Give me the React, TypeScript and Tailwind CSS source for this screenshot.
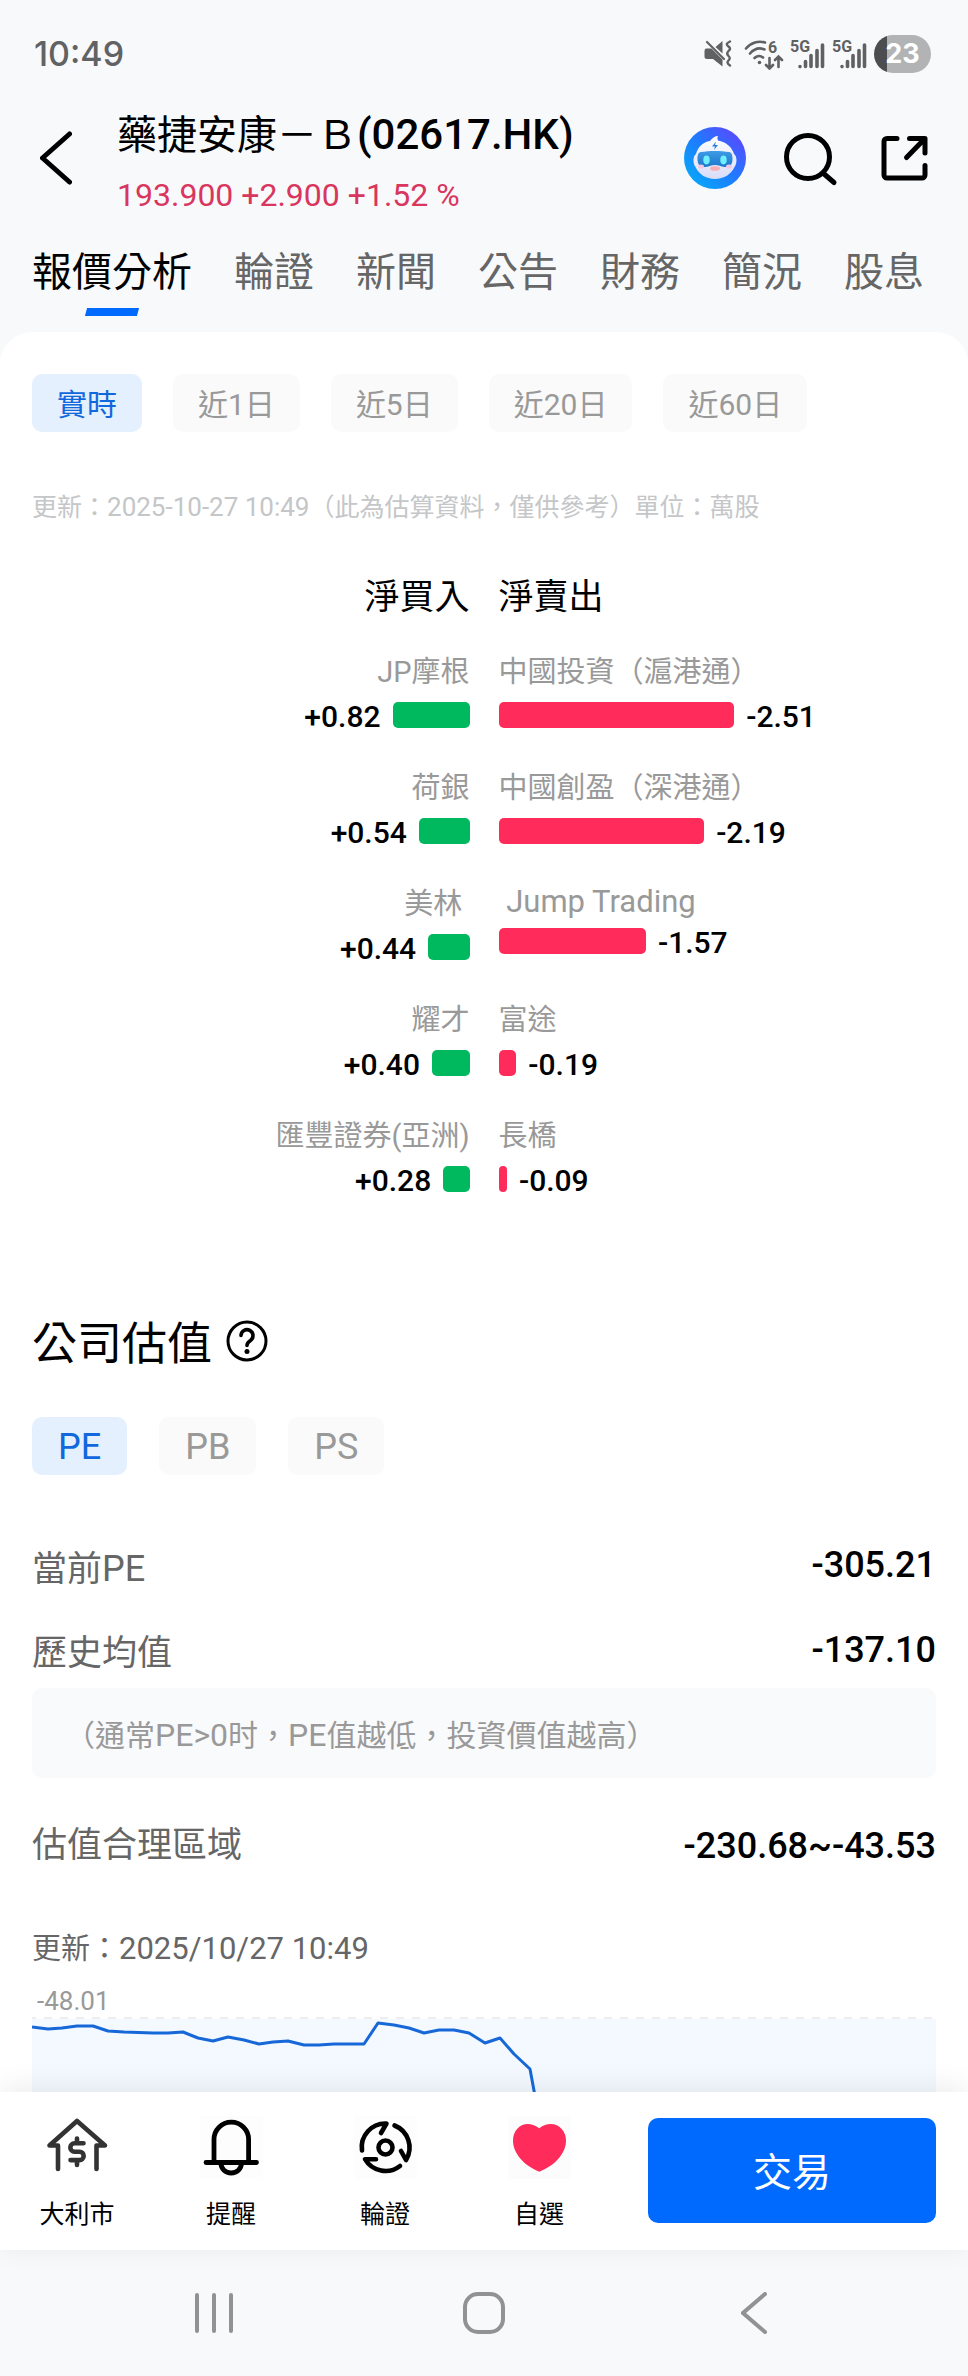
import { useState } from 'react';
import type { ReactNode } from 'react';

const tabs = ['報價分析', '輪證', '新聞', '公告', '財務', '簡況', '股息'];
const periods = ['實時', '近1日', '近5日', '近20日', '近60日'];
const ratios = ['PE', 'PB', 'PS'];

type Broker = { name: string; value: number; latin?: boolean };

const flows: { buy: Broker; sell: Broker }[] = [
  { buy: { name: 'JP摩根', value: 0.82 }, sell: { name: '中國投資（滬港通）', value: 2.51 } },
  { buy: { name: '荷銀', value: 0.54 }, sell: { name: '中國創盈（深港通）', value: 2.19 } },
  { buy: { name: '美林\u00a0', value: 0.44 }, sell: { name: '\u00a0Jump Trading', value: 1.57, latin: true } },
  { buy: { name: '耀才', value: 0.4 }, sell: { name: '富途', value: 0.19 } },
  { buy: { name: '匯豐證券(亞洲)', value: 0.28 }, sell: { name: '長橋', value: 0.09 } },
];

// Share of a column's width that one unit (10k shares) takes.
const PERCENT_PER_UNIT = 20;

const pePoints =
  '0,11 16,13 30,12 45,10 61,10 76,15 92,16 121,17 136,17 151,16 166,22 181,25 196,21 212,24 227,28 241,26 256,25 272,29 287,29 302,28 332,28 346,7 362,9 377,12 392,17 407,14 422,14 437,17 453,27 468,22 482,38 498,53 503,80';

function MuteIcon() {
  return (
    <svg width="28" height="28" viewBox="0 0 28 28" fill="#5f6162" aria-label="靜音">
      <path d="M2 8.5h5.500L18.500 19.500V26.500L9 19H3Q0.500 19 0.500 16.500V11Q0.500 8.800 2 8.500Z" />
      <path d="M18.500 1v12.500L11.500 7Z" />
      <path d="M3 2l17 17" stroke="#5f6162" strokeWidth="2.200" strokeLinecap="round" />
      <path d="M26 1.500c-4 2-4 3 -1.500 5s1.500 3 0 4.500-2 3 0 5 1.500 3 0 4.500-1.500 3 1.500 5" fill="none" stroke="#5f6162" strokeWidth="2.400" strokeLinecap="round" />
    </svg>
  );
}

function WifiIcon() {
  return (
    <svg width="40" height="32" viewBox="0 0 40 32" fill="none" stroke="#5f6162" strokeWidth="2.600" strokeLinecap="round" aria-label="Wi-Fi 6">
      <path d="M2 10.500C7 4.500 14.500 2.500 21 4.500" />
      <path d="M6 15.500C10.500 10.500 16 9.500 20.500 11.500" />
      <path d="M10.500 20C13 17.500 16.500 17.500 19 19.500" />
      <circle cx="15.500" cy="24.500" r="1.800" fill="#5f6162" stroke="none" />
      <path d="M25.500 20v10M22 27l3.500 3.500 3.500-3.500M34.500 29V19M31 22l3.500-3.500L38 22" />
      <text x="24" y="15" fill="#5f6162" stroke="none" className="font-[Roboto] text-[16px] font-bold">6</text>
    </svg>
  );
}

function SignalIcon() {
  return (
    <svg width="36" height="32" viewBox="0 0 36 32" stroke="#5f6162" strokeWidth="3.600" strokeLinecap="round" aria-label="5G">
      <text x="0" y="14" fill="#5f6162" stroke="none" className="font-[Roboto] text-[16px] font-bold">5G</text>
      <path d="M10 28.500v.1M15.500 23.500v5M21 17.500v11M27 12.500v16M32.500 7v21.500" />
    </svg>
  );
}

function Battery() {
  return (
    <div className="flex h-[38px] w-[57px] items-center justify-center rounded-full bg-[linear-gradient(90deg,#4c4d4f_13px,#b1b3b5_13px)]">
      <span className="font-[Inter] text-[27px] leading-none font-bold text-white">23</span>
    </div>
  );
}

function RobotAvatar() {
  return (
    <svg width="62" height="62" viewBox="0 0 62 62">
      <defs>
        <linearGradient id="sky" x1="0" y1="1" x2="1" y2="0">
          <stop offset="0" stopColor="#00b4f5" />
          <stop offset="0.500" stopColor="#1e7bff" />
          <stop offset="1" stopColor="#6a3cff" />
        </linearGradient>
        <linearGradient id="visor" x1="0" y1="0" x2="0" y2="1">
          <stop offset="0" stopColor="#3f9be6" />
          <stop offset="1" stopColor="#1c78cc" />
        </linearGradient>
        <linearGradient id="face" x1="0" y1="0" x2="0" y2="1">
          <stop offset="0" stopColor="#ffffff" />
          <stop offset="1" stopColor="#d9dcf8" />
        </linearGradient>
      </defs>
      <circle cx="31" cy="31" r="31" fill="url(#sky)" />
      <path d="M26 14C28 11 31 9 34 9c-1 1.500-.5 3 0 4.500C42 15 48 20 50 27c3 2 3.500 9 .5 13-3 7-10.500 12-19.500 12S14.500 47 11.500 40c-3-4-2.500-11 .5-13 2-7 7-12 14-13Z" fill="url(#face)" />
      <path d="M17 25c8-1.500 20-1.500 28 0 3 .5 3.500 3 3.500 7 0 6-3 8.500-8 8-4-.5-5.500-2-9.500-2s-5.500 1.500-9.500 2c-5 .5-8-2-8-8 0-4 .5-6.500 3.500-7Z" fill="url(#visor)" />
      <ellipse cx="22.500" cy="33" rx="3.200" ry="4.400" fill="#6ff0ff" />
      <ellipse cx="39.500" cy="33" rx="3.200" ry="4.400" fill="#6ff0ff" />
      <ellipse cx="31" cy="41.500" rx="5" ry="2.300" fill="#f7aeb4" />
      <ellipse cx="17" cy="39.500" rx="3" ry="2" fill="#f3c6e6" />
      <ellipse cx="45" cy="39.500" rx="3" ry="2" fill="#f3c6e6" />
      <path d="M32 14.500l-4 5h3l-1 3.500 4-5h-3Z" fill="#2b7fe0" />
    </svg>
  );
}

function Chip({ label, active, className, onClick }: { label: string; active: boolean; className: string; onClick: () => void }) {
  return (
    <button
      type="button"
      aria-pressed={active}
      onClick={onClick}
      className={`h-[58px] rounded-[10px] pt-[2px] whitespace-nowrap ${className} ${active ? 'bg-[#e4f0fe] text-[#1068dc]' : 'bg-[#fafafa] text-[#999]'}`}
    >
      {label}
    </button>
  );
}

function FlowCell({ broker, side }: { broker: Broker; side: 'buy' | 'sell' }) {
  const buy = side === 'buy';
  return (
    <div className={buy ? 'text-right' : 'text-left'}>
      <div className={`whitespace-nowrap text-[#999] ${broker.latin ? 'text-[31px] leading-[39px]' : 'text-[29px] leading-[45px]'}`}>{broker.name}</div>
      <div className={`mt-[2px] flex h-9 items-center gap-3 ${buy ? 'flex-row-reverse' : ''}`}>
        <div className={`h-[26px] rounded-[5px] ${buy ? 'bg-[#00b95f]' : 'bg-[#ff2b5a]'}`} style={{ width: `${broker.value * PERCENT_PER_UNIT}%` }} />
        <span className="pt-[3px] text-[30px] leading-9 font-medium">
          {buy ? '+' : '-'}
          {broker.value.toFixed(2)}
        </span>
      </div>
    </div>
  );
}

function Metric({ label, value, className }: { label: ReactNode; value: string; className: string }) {
  return (
    <div className={`flex h-[60px] justify-between ${className}`}>
      <dt className="text-[35px] leading-[62px] text-[#666]">{label}</dt>
      <dd className="text-[36px] leading-[54px] font-medium">{value}</dd>
    </div>
  );
}

function BarItem({ label, children }: { label: string; children: ReactNode }) {
  return (
    <button type="button" className="flex w-[154px] flex-col items-center gap-[18px]">
      {children}
      <span className="text-[25px] leading-9">{label}</span>
    </button>
  );
}

export default function App() {
  const [tab, setTab] = useState('報價分析');
  const [period, setPeriod] = useState('實時');
  const [ratio, setRatio] = useState('PE');

  return (
    <div lang="zh-Hant" className="flex min-h-screen flex-col bg-[#f8f9fb] font-[Roboto,'Noto_Sans_CJK_TC',sans-serif] text-black">
      <div className="flex h-[99px] items-center justify-between pt-2 pr-[37px] pl-[34px]">
        <span className="font-[Inter] text-[34px] leading-none font-medium text-[#606263]">10:49</span>
        <div className="flex items-center">
          <MuteIcon />
          <span className="ml-3 flex items-center gap-[6px]">
            <WifiIcon />
            <SignalIcon />
            <SignalIcon />
            <Battery />
          </span>
        </div>
      </div>

      <header className="flex items-center px-10">
        <button type="button" aria-label="返回">
          <svg width="32" height="54" viewBox="0 0 32 54" fill="none" stroke="#000" strokeWidth="5" strokeLinecap="round" strokeLinejoin="round">
            <path d="M29.500 3L2.500 27l27 24" />
          </svg>
        </button>
        <div className="ml-[45px] flex-1 whitespace-nowrap">
          <h1 className="h-[70px] text-[40px] leading-[72px]">
            藥捷安康－Ｂ<span className="text-[42px] font-medium">(02617.HK)</span>
          </h1>
          <p className="mt-1 text-[32px] leading-[44px] text-[#d8365f]">193.900 +2.900 +1.52 %</p>
        </div>
        <div className="flex items-center gap-10">
          <button type="button" aria-label="智能助手">
            <RobotAvatar />
          </button>
          <button type="button" aria-label="搜尋">
            <svg className="overflow-visible" width="54" height="54" viewBox="0 0 54 54" fill="none" stroke="#000" strokeWidth="5" strokeLinecap="round">
              <circle cx="22" cy="26" r="21.500" />
              <path d="M37 42l11 9.500" />
            </svg>
          </button>
          <button type="button" aria-label="分享">
            <svg width="48" height="48" viewBox="0 0 48 48" fill="none" stroke="#000" strokeWidth="5" strokeLinecap="round" strokeLinejoin="round">
              <path d="M17 4.500H7a3 3 0 0 0-3 3V41a3 3 0 0 0 3 3h35a3 3 0 0 0 3-3V31.500" />
              <path d="M29.500 4.500H45V19M44 5.500L26.500 23.500" />
            </svg>
          </button>
        </div>
      </header>

      <nav className="flex gap-[42px] px-8 pt-[25px] pb-4">
        {tabs.map((name) => (
          <button
            key={name}
            type="button"
            onClick={() => setTab(name)}
            className={`flex flex-col items-center gap-1 text-[40px] leading-[62px] whitespace-nowrap ${tab === name ? 'text-black' : 'text-[#666]'}`}
          >
            {name}
            <span className={`h-2 w-[52px] -skew-x-[15deg] ${tab === name ? 'bg-[#006aff]' : ''}`} />
          </button>
        ))}
      </nav>

      <main className="flex-1 rounded-t-[32px] bg-white pt-[42px]">
        <div className="flex gap-[31px] px-8">
          {periods.map((name) => (
            <Chip key={name} label={name} active={period === name} onClick={() => setPeriod(name)} className="px-[25px] text-[30px]" />
          ))}
        </div>

        <p className="mt-[57px] h-9 px-8 text-[25px] leading-9 text-[#c4c6c8]">
          更新：<span className="text-[26px]">2025-10-27 10:49</span>（此為估算資料，僅供參考）單位：萬股
        </p>

        <section className="mt-[45px]">
          <div className="grid grid-cols-2 gap-x-[29px] text-[35px] leading-[56px]">
            <h2 className="text-right">淨買入</h2>
            <h2>淨賣出</h2>
          </div>
          <div className="mt-6 grid grid-cols-2 gap-x-[29px] gap-y-[33px]">
            {flows.flatMap(({ buy, sell }) => [
              <FlowCell key={buy.name} broker={buy} side="buy" />,
              <FlowCell key={sell.name} broker={sell} side="sell" />,
            ])}
          </div>
        </section>

        <section className="mt-[115px] px-8">
          <div className="flex items-center gap-[14px]">
            <h2 className="text-[45px] leading-[66px]">公司估值</h2>
            <button type="button" aria-label="說明" className="pb-2">
              <svg width="42" height="42" viewBox="0 0 42 42" fill="none" stroke="#000" strokeLinecap="round">
                <circle cx="21" cy="21" r="19" strokeWidth="3" />
                <path d="M15 15.500a6 6 0 1 1 9.500 5c-2.500 1.700-3.500 2.500-3.500 5" strokeWidth="3.600" />
                <circle cx="21" cy="31.500" r="2.500" fill="#000" stroke="none" />
              </svg>
            </button>
          </div>

          <div className="mt-[39px] flex gap-8">
            {ratios.map((name) => (
              <Chip key={name} label={name} active={ratio === name} onClick={() => setRatio(name)} className="px-[26px] text-[36px]" />
            ))}
          </div>

          <dl className="mt-[63px]">
            <Metric
              label={
                <>
                  當前<span className="text-[36px]">PE</span>
                </>
              }
              value="-305.21"
              className="items-start"
            />
            <Metric label="歷史均值" value="-137.10" className="mt-[25px] items-start" />
            <div className="mt-[5px] flex h-[90px] items-center rounded-[10px] bg-[#f9fafc] px-[33px] pt-[3px] text-[30px] text-[#999]">
              <p>
                （通常<span className="text-[32px]">PE&gt;0</span>时，<span className="text-[32px]">PE</span>值越低，投資價值越高）
              </p>
            </div>
            <Metric label="估值合理區域" value="-230.68~-43.53" className="mt-[38px] items-center" />
          </dl>

          <p className="mt-[50px] h-11 text-[29px] leading-[46px] text-[#666]">
            更新：<span className="text-[31px]">2025/10/27 10:49</span>
          </p>
          <p className="mt-4 pl-[5px] text-[26px] leading-[30px] text-[#999]">-48.01</p>
          <svg className="block h-[76px] w-full" viewBox="0 0 904 76" preserveAspectRatio="none" aria-label="PE走勢">
            <rect x="0" y="3" width="904" height="73" fill="#f4f8ff" />
            <path d="M0 2H904" stroke="#ededed" strokeWidth="2" strokeDasharray="8 8" strokeDashoffset="4" />
            <polyline points={pePoints} fill="none" stroke="#1668d8" strokeWidth="3" strokeLinejoin="round" />
          </svg>
        </section>
      </main>

      <footer className="relative flex bg-white pt-6 pb-[17px] shadow-[0_-4px_28px_rgba(0,0,0,0.08)]">
        <BarItem label="大利市">
          <svg width="63" height="63" viewBox="0 0 63 63" fill="none" stroke="#333" strokeWidth="4.600" strokeLinecap="round" strokeLinejoin="round">
            <path d="M12 53V29.500H3.500L31 5l28 24.500H50.500V53" />
            <path d="M37.500 27.300H28.500a4.200 4.200 0 0 0 0 8.400h5a4.200 4.200 0 0 1 0 8.400H24.500M31 22.500v4M31 45v4" />
          </svg>
        </BarItem>
        <BarItem label="提醒">
          <svg className="bg-[#fdfdfd]" width="63" height="63" viewBox="0 0 63 63" fill="none" stroke="#000" strokeWidth="4.800" strokeLinecap="round">
            <path d="M14 46V23.500a17.300 17.300 0 0 1 34.600 0V46M6 46.500H56.500M21 47c0 6 4.500 10 10.200 10s10.200-4 10.200-10" />
          </svg>
        </BarItem>
        <BarItem label="輪證">
          <svg className="bg-[#fdfdfd]" width="63" height="63" viewBox="0 0 63 63" fill="none" stroke="#000" strokeWidth="4.600" strokeLinecap="round" strokeLinejoin="round">
            <circle cx="31.500" cy="31.500" r="7" />
            <path d="M8 34.500A23.700 23.700 0 0 1 32.500 7.500L27 17" />
            <path d="M40.500 9.500A23.700 23.700 0 0 1 52 44L47 35" />
            <path d="M46 50A23.700 23.700 0 0 1 11 43.200H22" />
          </svg>
        </BarItem>
        <BarItem label="自選">
          <svg className="bg-[#fcfcfc]" width="63" height="63" viewBox="0 0 63 63" fill="#ff2b5a">
            <path d="M31.300 12.300C27 9 23 8 20 8C11 8 5 15.500 5 24.500C5 38 17 50 31.300 55.700C46 50 58 38 58 24.500C58 15.500 51.500 8 42.500 8C39 8 35 9 31.300 12.300Z" />
          </svg>
        </BarItem>
        <button type="button" className="mx-8 mt-[2px] h-[105px] flex-1 rounded-[10px] bg-[#006aff] pt-[6px] text-[39px] text-white">
          交易
        </button>
      </footer>

      <div className="flex h-[126px] items-center px-[79px]">
        <button type="button" aria-label="最近使用" className="flex flex-1 justify-center">
          <svg width="38" height="42" viewBox="0 0 38 42" stroke="#909294" strokeWidth="4" strokeLinecap="round">
            <path d="M2 3v36M19 3v36M36 3v36" />
          </svg>
        </button>
        <button type="button" aria-label="主頁" className="flex flex-1 justify-center">
          <span className="h-[42px] w-[42px] rounded-[15px] border-4 border-[#909294]" />
        </button>
        <button type="button" aria-label="上一頁" className="flex flex-1 justify-center">
          <svg width="26" height="42" viewBox="0 0 26 42" fill="none" stroke="#909294" strokeWidth="4" strokeLinecap="round">
            <path d="M24 2L2 21l22 19" />
          </svg>
        </button>
      </div>
    </div>
  );
}
